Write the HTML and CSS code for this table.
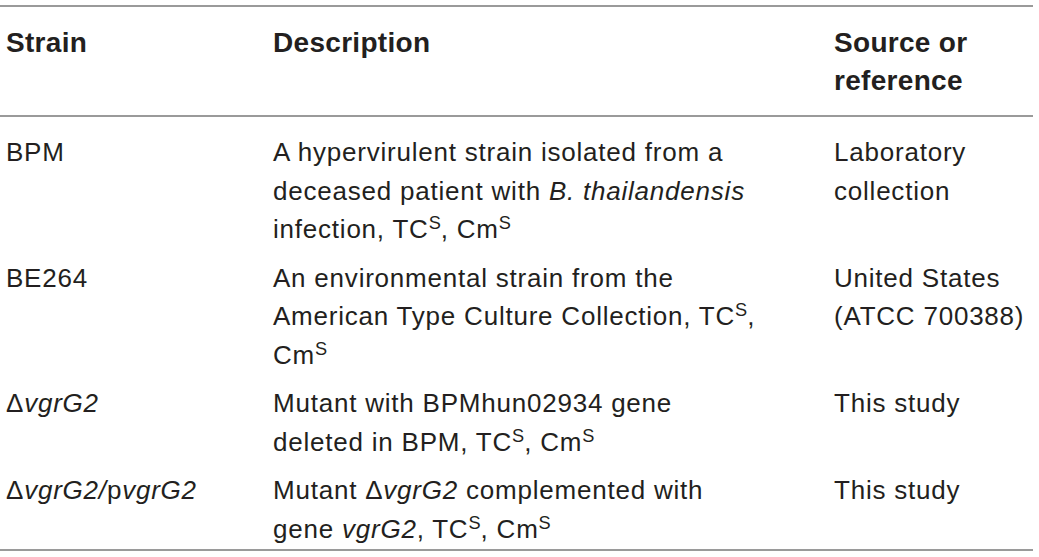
FILE: index.html
```html
<!DOCTYPE html>
<html lang="en">
<head>
<meta charset="utf-8">
<title>Strains</title>
<link rel="stylesheet" href="styles.css">
</head>
<body>
<table class="strains">
  <colgroup>
    <col class="c-strain">
    <col class="c-desc">
    <col class="c-src">
  </colgroup>
  <thead>
    <tr>
      <th>Strain</th>
      <th>Description</th>
      <th class="src">Source or reference</th>
    </tr>
  </thead>
  <tbody>
    <tr>
      <td>BPM</td>
      <td class="desc">A hypervirulent strain isolated from a deceased patient with <i>B. thailandensis</i> infection, TC<sup>S</sup>, Cm<sup>S</sup></td>
      <td class="src">Laboratory collection</td>
    </tr>
    <tr>
      <td>BE264</td>
      <td class="desc">An environmental strain from the American Type Culture Collection, TC<sup>S</sup>, Cm<sup>S</sup></td>
      <td class="src">United States (ATCC 700388)</td>
    </tr>
    <tr>
      <td>&Delta;<i>vgrG2</i></td>
      <td class="desc">Mutant with BPMhun02934 gene deleted in BPM, TC<sup>S</sup>, Cm<sup>S</sup></td>
      <td class="src">This study</td>
    </tr>
    <tr>
      <td>&Delta;<i>vgrG2/</i>p<i>vgrG2</i></td>
      <td class="desc">Mutant &Delta;<i>vgrG2</i> complemented with gene <i>vgrG2</i>, TC<sup>S</sup>, Cm<sup>S</sup></td>
      <td class="src">This study</td>
    </tr>
  </tbody>
</table>
</body>
</html>
```

FILE: styles.css
```css
html, body {
  margin: 0;
  padding: 0;
  background: #ffffff;
}

body {
  padding-top: 5px;
  font-family: "Liberation Sans", Arial, sans-serif;
  color: #231f20;
}

.strains {
  width: 1033px;
  border-collapse: collapse;
  table-layout: fixed;
  border-top: 2px solid #9a9a9a;
  border-bottom: 2px solid #9a9a9a;
}

.c-strain { width: 267px; }
.c-desc { width: 561px; }
.c-src { width: 205px; }

.strains th {
  text-align: left;
  vertical-align: top;
  font-size: 28px;
  font-weight: bold;
  line-height: 38px;
  letter-spacing: 0.3px;
  padding: 17px 4px 15px 6px;
  border-bottom: 2px solid #9a9a9a;
}

.strains td {
  text-align: left;
  vertical-align: top;
  font-size: 26px;
  line-height: 38.5px;
  letter-spacing: 0.78px;
  padding: 7px 4px 3px 6px;
}

.strains td.desc {
  padding-right: 65px;
}

.strains .src {
  padding-right: 0;
}

.strains tbody tr:first-child td {
  padding-top: 16px;
}

.strains tbody tr:last-child td {
  padding-bottom: 1px;
}

.strains sup {
  font-size: 0.7em;
  line-height: 0;
  vertical-align: 0.52em;
  letter-spacing: 0;
}
```
